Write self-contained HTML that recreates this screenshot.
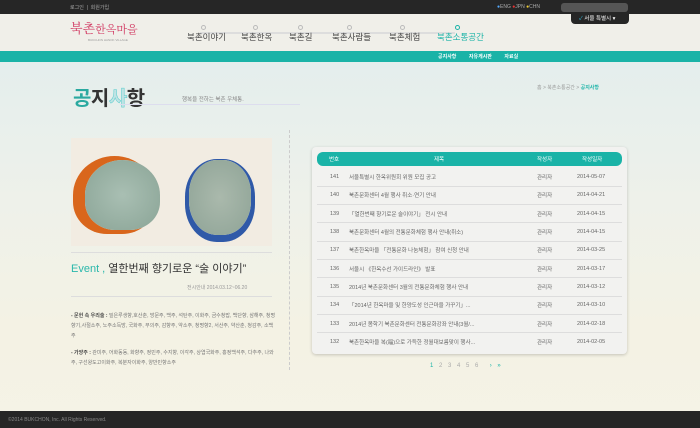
<!DOCTYPE html>
<html><head><meta charset="utf-8"><style>
*{margin:0;padding:0;box-sizing:border-box}
body{width:700px;height:428px;overflow:hidden;font-family:"Liberation Sans","Noto Sans CJK KR",sans-serif;background:linear-gradient(#e4eeed 60px,#eef1ea 200px,#f4f2e4 330px,#f5f3e6);position:relative;color:#555}
.a{position:absolute}
.top{left:0;top:0;width:700px;height:14px;background:#262626}
.hdr{left:0;top:14px;width:700px;height:37px;background:#f0efe9}
.teal{left:0;top:51px;width:700px;height:11px;background:#1ab3a7}
.foot{left:0;top:411px;width:700px;height:17px;background:#262626;color:#888;font-size:5px;padding:6px 0 0 8px}
.nav span{position:absolute;top:31px;font-size:8.5px;color:#444;white-space:nowrap}
.dot{position:absolute;top:25px;width:5px;height:5px;border:1px solid #bbb;border-radius:50%;background:#f0efe9}
.t{font-size:5px;white-space:nowrap}
table{border-collapse:collapse;width:305px;font-size:5.5px;color:#666}
td{height:18.3px;border-bottom:1px solid #ddd}
</style></head><body>
<div class="a top"></div>
<div class="a t" style="left:70px;top:4px;color:#aaa">로그인 &nbsp;|&nbsp; 회원가입</div>
<div class="a t" style="left:497px;top:4px;color:#aaa"><span style="color:#5af">●</span>ENG <span style="color:#e33">●</span>JPN <span style="color:#ec3">●</span>CHN</div>
<div class="a" style="left:561px;top:3px;width:67px;height:9px;background:#555;border-radius:3px"></div>
<div class="a" style="left:571px;top:12px;width:58px;height:12px;background:#262626;border-radius:0 0 4px 4px;color:#fff;font-size:5.5px;padding:2px 0 0 8px;z-index:3"><span style="color:#3bd">✓</span> 서울 특별시 ▾</div>
<div class="a hdr"></div>
<div class="a" style="left:70px;top:18px;font-size:13px;color:#d0315c;font-family:'Noto Serif CJK SC',serif">북촌<span style="font-size:11px">한옥마을</span></div>
<div class="a" style="left:88px;top:38px;font-size:3px;color:#999">BUKCHON HANOK VILLAGE</div>
<div class="a" style="left:200px;top:32px;width:255px;height:2px;background:#ddd"></div>
<div class="nav">
<div class="dot" style="left:201px"></div><div class="dot" style="left:253px"></div><div class="dot" style="left:298px"></div><div class="dot" style="left:347px"></div><div class="dot" style="left:400px"></div><div class="dot" style="left:455px;border-color:#1ab3a7"></div>
<span style="left:187px">북촌이야기</span><span style="left:241px">북촌한옥</span><span style="left:289px">북촌길</span><span style="left:332px">북촌사람들</span><span style="left:389px">북촌체험</span><span style="left:437px;color:#1ab3a7">북촌소통공간</span></div>
<div class="a teal"></div>
<div class="a t" style="left:438px;top:53px;color:#fff;font-weight:bold">공지사항 &nbsp;&nbsp;&nbsp;&nbsp;&nbsp;&nbsp;&nbsp; 자유게시판 &nbsp;&nbsp;&nbsp;&nbsp;&nbsp;&nbsp;&nbsp; 자료실</div>
<div class="a" style="left:73px;top:82px;font-size:20px;font-weight:bold;letter-spacing:-0.5px"><span style="color:#2aa9a0">공</span><span style="color:#333">지</span><span style="color:#bfe3e4;-webkit-text-stroke:0.5px #5cc">사</span><span style="color:#333">항</span></div>
<div class="a" style="left:182px;top:95px;font-size:5.5px;color:#888">행복을 전하는 북촌 우체통.</div>
<div class="a" style="left:120px;top:104px;width:180px;height:1px;background:#dde"></div>
<div class="a t" style="left:537px;top:84px;color:#999">홈 &gt; 북촌소통공간 &gt; <b style="color:#1ab3a7">공지사항</b></div>
<div class="a" style="left:71px;top:138px;width:201px;height:108px;background:#f2ece2;overflow:hidden">
<div class="a" style="left:14px;top:22px;width:75px;height:70px;border-radius:50% 50% 40% 40%;background:radial-gradient(#a9bfb3,#8aa496);box-shadow:-8px 0 0 4px #d9661c"></div>
<div class="a" style="left:118px;top:22px;width:62px;height:75px;border-radius:45%;background:radial-gradient(#aab9ac,#8ea396);box-shadow:0 3px 0 4px #2f59a8"></div>
</div>
<div class="a" style="left:71px;top:252px;width:201px;height:1px;background:#ddd"></div>
<div class="a" style="left:71px;top:260px;font-size:11px;color:#333;white-space:nowrap"><span style="color:#2ab8ab">Event ,</span> 열한번째 향기로운 “술 이야기”</div>
<div class="a t" style="left:187px;top:284px;color:#999">전시안내 2014.03.12~06.20</div>
<div class="a" style="left:71px;top:296px;width:201px;height:1px;background:#ddd"></div>
<div class="a" style="left:71px;top:311px;width:205px;font-size:5px;line-height:10px;color:#777"><b style="color:#444">- 문헌 속 우리술 :</b> 밀은루생향,호산춘, 방문주, 백주, 석탄주, 이화주, 금수청밥, 백단향, 삼해주, 청명향기,사절소주, 노주소득방, 국화주, 부의주, 감향주, 약소주, 청명향2, 서산주, 약산춘, 청감주, 소백주</div>
<div class="a" style="left:71px;top:348px;width:205px;font-size:5px;line-height:10px;color:#777"><b style="color:#444">- 가양주 :</b> 관미주, 어화동동, 화향주, 정민주, 수지향, 이각주, 상엽국화주, 홍정백석주, 다추주, 나와주, 구선왕도고이화주, 복분자이화주, 양반민향소주</div>
<div class="a" style="left:289px;top:130px;width:1px;height:240px;border-left:1px dashed #ccc"></div>
<div class="a" style="left:312px;top:147px;width:315px;height:207px;background:#f2f2f0;border-radius:4px;box-shadow:0 1px 3px rgba(0,0,0,.2)"></div>
<div class="a" style="left:317px;top:152px;width:305px;height:14px;background:#1ab3a7;border-radius:6px;color:#fff;font-size:5.5px">
<span class="a" style="left:12px;top:3px">번호</span><span class="a" style="left:117px;top:3px">제목</span><span class="a" style="left:220px;top:3px">작성자</span><span class="a" style="left:265px;top:3px">작성일자</span></div>
<table class="a" style="left:317px;top:168px">
<tr><td style="width:32px;padding-left:13px">141</td><td style="width:188px">서울특별시 한옥위원회 위원 모집 공고</td><td style="width:40px">관리자</td><td>2014-05-07</td></tr>
<tr><td style="padding-left:13px">140</td><td>북촌문화센터 4월 행사 취소·연기 안내</td><td>관리자</td><td>2014-04-21</td></tr>
<tr><td style="padding-left:13px">139</td><td>「열한번째 향기로운 술이야기」 전시 안내</td><td>관리자</td><td>2014-04-15</td></tr>
<tr><td style="padding-left:13px">138</td><td>북촌문화센터 4월의 전통문화체험 행사 안내(취소)</td><td>관리자</td><td>2014-04-15</td></tr>
<tr><td style="padding-left:13px">137</td><td>북촌한옥마을 「전통문화 나눔체험」 참여 신청 안내</td><td>관리자</td><td>2014-03-25</td></tr>
<tr><td style="padding-left:13px">136</td><td>서울시 《한옥수선 가이드라인》 발표</td><td>관리자</td><td>2014-03-17</td></tr>
<tr><td style="padding-left:13px">135</td><td>2014년 북촌문화센터 3월의 전통문화체험 행사 안내</td><td>관리자</td><td>2014-03-12</td></tr>
<tr><td style="padding-left:13px">134</td><td>「2014년 한옥마을 및 한양도성 인근마을 가꾸기」...</td><td>관리자</td><td>2014-03-10</td></tr>
<tr><td style="padding-left:13px">133</td><td>2014년 봄학기 북촌문화센터 전통문화강좌 안내(3월/...</td><td>관리자</td><td>2014-02-18</td></tr>
<tr><td style="padding-left:13px;border:0">132</td><td style="border:0">북촌한옥마을 복(福)으로 가득한 정월대보름맞이 행사...</td><td style="border:0">관리자</td><td style="border:0">2014-02-05</td></tr>
</table>
<div class="a" style="left:430px;top:363px;font-size:6px;color:#aaa;word-spacing:4px;white-space:nowrap"><span style="color:#1ab3a7">1</span> 2 3 4 5 6 &nbsp;<span style="color:#1ab3a7">› »</span></div>
<div class="a foot">©2014 BUKCHON, Inc. All Rights Reserved.</div>
</body></html>
